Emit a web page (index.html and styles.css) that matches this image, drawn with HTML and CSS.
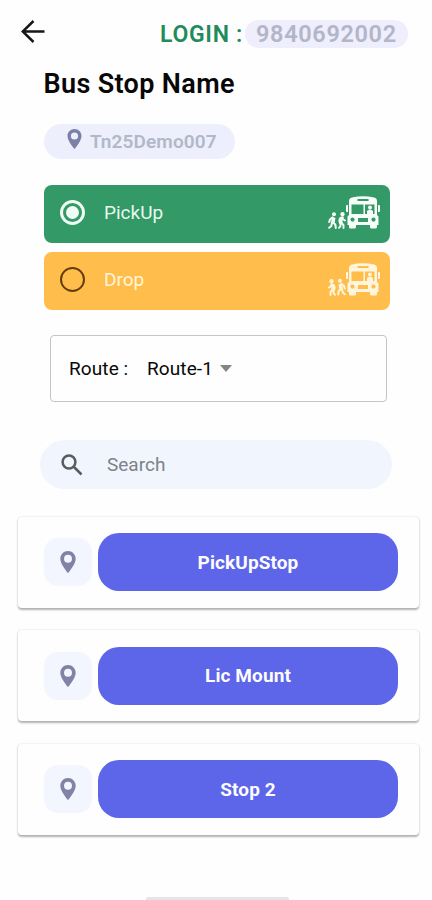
FILE: index.html
```html
<!DOCTYPE html>
<html lang="en">
<head>
<meta charset="utf-8">
<meta name="viewport" content="width=device-width, initial-scale=1">
<title>Bus Stop Name</title>
<link rel="stylesheet" href="styles.css">
</head>
<body>
<svg class="defs" width="0" height="0" aria-hidden="true">
  <symbol id="pin" viewBox="5 2 14 20"><path fill-rule="evenodd" d="M12 2C8.13 2 5 5.13 5 9c0 5.25 7 13 7 13s7-7.75 7-13c0-3.87-3.13-7-7-7zm0 10.600a3.600 3.600 0 1 1 0-7.200 3.600 3.600 0 0 1 0 7.200z"/></symbol>
  <symbol id="bus" viewBox="0 0 34 33">
    <path fill-rule="evenodd" d="M6 1.500Q17-1 28 1.500Q31 2 31 5V19l1.500 1.500V29h-31v-8.500L3 19V5Q3 2 6 1.500zM11.500 3v2h11V3zM5.500 8.500v9.500H17.500V8.500zM19 8.500v9.500h9.500V8.500zM6.500 21.500a2.100 2.100 0 1 0 0 4.200 2.100 2.100 0 0 0 0-4.200zM12 22v4h10v-4zM27.500 21.500a2.100 2.100 0 1 0 0 4.200 2.100 2.100 0 0 0 0-4.200z"/>
    <path d="M1 9h1v7H1Q0 16 0 15V10Q0 9 1 9zM32 9h1q1 0 1 1v5q0 1-1 1h-1zM3 29h7v2q0 1.500-1.500 1.500h-4Q3 32.500 3 31zM24 29h7v2q0 1.500-1.500 1.500h-4Q24 32.500 24 31z"/>
    <circle cx="24" cy="11.500" r="2"/><path d="M21 18v-3q3-3 6 0v3z"/>
  </symbol>
  <symbol id="climber" viewBox="0 0 9 17">
    <circle cx="6" cy="2.200" r="2"/>
    <path d="M4 4.500L7.500 6 6.500 11.500 3 11z"/>
    <path d="M4.300 5.500L2 7.500 1.200 10M5 10.500L7.300 12.500 7.800 16M4 10.500L3.300 14 1.200 15.800" fill="none" stroke="currentColor" stroke-width="2" stroke-linecap="round" stroke-linejoin="round"/>
  </symbol>
  <symbol id="rider" viewBox="0 0 9 17">
    <circle cx="5.500" cy="2.200" r="2.100"/>
    <path d="M3 5Q6 3.500 7 5L5.500 8.500 6 12 2.500 12Q0 8 3 5z"/>
    <path d="M5 6.500L8 8.500M5 11.500L6.500 13 6.500 16M3.500 11.500L3.500 14 2 15.800" fill="none" stroke="currentColor" stroke-width="1.900" stroke-linecap="round" stroke-linejoin="round"/>
  </symbol>
</svg>
<main class="screen">
  <header class="topbar">
    <svg class="back" viewBox="0 0 24 24"><path d="M23.500 11.500H1.500M12.500 1L1.700 11.500 12.500 22"/></svg>
    <div class="login"><span class="login-label">LOGIN :</span><span class="phone"><span>9840692002</span></span></div>
  </header>
  <h1><span>Bus Stop Name</span></h1>
  <div class="vehicle"><svg class="pin"><use href="#pin"/></svg><span>Tn25Demo007</span></div>
  <section class="options">
    <div class="option pickup"><i class="radio checked"></i><span>PickUp</span>
      <div class="art"><svg class="walker"><use href="#climber"/></svg><svg class="walker"><use href="#rider"/></svg><svg class="bus"><use href="#bus"/></svg></div></div>
    <div class="option drop"><i class="radio"></i><span>Drop</span>
      <div class="art"><svg class="walker flip"><use href="#rider"/></svg><svg class="walker tall flip"><use href="#climber"/></svg><svg class="bus"><use href="#bus"/></svg></div></div>
  </section>
  <div class="route"><span class="route-label">Route :</span><span class="route-value">Route-1</span><i class="caret"></i></div>
  <div class="search"><svg viewBox="0 0 22 22"><circle cx="8" cy="8" r="6.400"/><path d="M13 13l7.500 7.500"/></svg><span>Search</span></div>
  <section class="stops">
    <article class="stop"><div class="pinbox"><svg class="pin"><use href="#pin"/></svg></div><div class="name"><span>PickUpStop</span></div></article>
    <article class="stop"><div class="pinbox"><svg class="pin"><use href="#pin"/></svg></div><div class="name"><span>Lic Mount</span></div></article>
    <article class="stop"><div class="pinbox"><svg class="pin"><use href="#pin"/></svg></div><div class="name"><span>Stop 2</span></div></article>
  </section>
  <div class="home"></div>
</main>
</body>
</html>
```
FILE: styles.css
```css
* { box-sizing: border-box; }
body { margin: 0; background: #fefefe; font-family: Roboto, sans-serif; color: #080808; }
.defs { display: block; }
svg { display: block; flex: none; }
.screen { width: 432px; height: 900px; overflow: hidden; display: flex; flex-direction: column; }
.topbar { display: flex; justify-content: space-between; height: 48px; padding: 20px 24px 0 21px; }
.back { width: 24px; height: 24px; fill: none; stroke: #171717; stroke-width: 2.500; }
.login { display: flex; align-items: center; height: 28px; white-space: nowrap; }
.login-label { width: 85px; font-size: 23px; font-weight: 600; letter-spacing: .7px; color: #218b5c; }
.phone { width: 163px; height: 28px; border-radius: 14px; background: #eeeefc; color: #b3b5c8; font-size: 23.500px; line-height: 29px; font-weight: 600; letter-spacing: .65px; padding-left: 11px; }
h1 { margin: 20px 0 0 43.500px; height: 32px; line-height: 32px; font-size: 27px; font-weight: 600; letter-spacing: .35px; white-space: nowrap; }
.vehicle { margin: 24px 0 0 44px; width: 191px; height: 35px; border-radius: 18px; background: #eeeffc; display: flex; align-items: center; padding-left: 23px; gap: 8px; color: #b2b7c9; font-size: 19px; font-weight: 600; letter-spacing: .1px; }
.pin { width: 16px; height: 22px; fill: #7c7fa6; }
.vehicle .pin { width: 15px; height: 20px; margin-top: -5px; }
.options { margin: 26px 42px 0 44px; display: flex; flex-direction: column; gap: 9px; }
.option { height: 58px; border-radius: 8px; display: flex; align-items: center; padding: 0 10px 4px 16px; font-size: 19px; }
.pickup { background: #339966; color: #e7f8ed; }
.drop { background: #ffbd4c; color: #fff5da; }
.radio { width: 25px; height: 25px; border: 2.500px solid #653e0b; border-radius: 50%; margin-right: 19px; display: grid; place-items: center; }
.checked { border-width: 3px; border-color: #effbf4; }
.checked::after { content: ""; width: 13px; height: 13px; border-radius: 50%; background: #effbf4; }
.art { margin-left: auto; display: flex; align-items: flex-end; color: #f8fff8; fill: currentColor; }
.drop .art { color: #fff5dc; }
.walker { width: 9px; height: 17px; }
.tall { height: 18px; }
.bus { width: 34px; height: 33px; }
.flip { transform: scaleX(-1); }
.route { margin: 25px 45px 0 50px; height: 67px; border: 1.500px solid #c5c5c5; border-radius: 4px; display: flex; align-items: center; padding-left: 18px; font-size: 19px; letter-spacing: .1px; }
.route-label { width: 78px; }
.route-value { width: 73px; }
.caret { border: 6px solid transparent; border-top: 7px solid #858585; border-bottom: 0; }
.search { margin: 38px 40px 0; height: 49px; border-radius: 25px; background: #f1f5fe; display: flex; align-items: center; padding-left: 21px; gap: 24px; font-size: 19px; color: #7f8287; }
.search svg { width: 22px; height: 22px; fill: none; stroke: #595b5f; stroke-width: 2.500; }
.stops { margin: 27.500px 13px 0 18px; display: flex; flex-direction: column; gap: 22.500px; }
.stop { height: 91px; border-radius: 4px; background: #fefefe; box-shadow: 0 1.500px 2px #b2b2b2, 0 0 2px #e5e5e5; display: flex; align-items: center; padding: 0 21px 0 26px; gap: 6px; }
.pinbox { width: 48px; height: 48px; border-radius: 14px; background: #f3f6fe; display: grid; place-items: center; }
.pinbox .pin { fill: #8083a5; }
.name { flex: 1; height: 58px; border-radius: 21px; background: #5d65e8; color: #fcfcff; display: grid; place-items: center; font-size: 19px; font-weight: 700; letter-spacing: .1px; }
.home { width: 143px; height: 3px; margin: auto 0 0 146px; background: #e5e5e5; border-radius: 2px 2px 0 0; }
```
